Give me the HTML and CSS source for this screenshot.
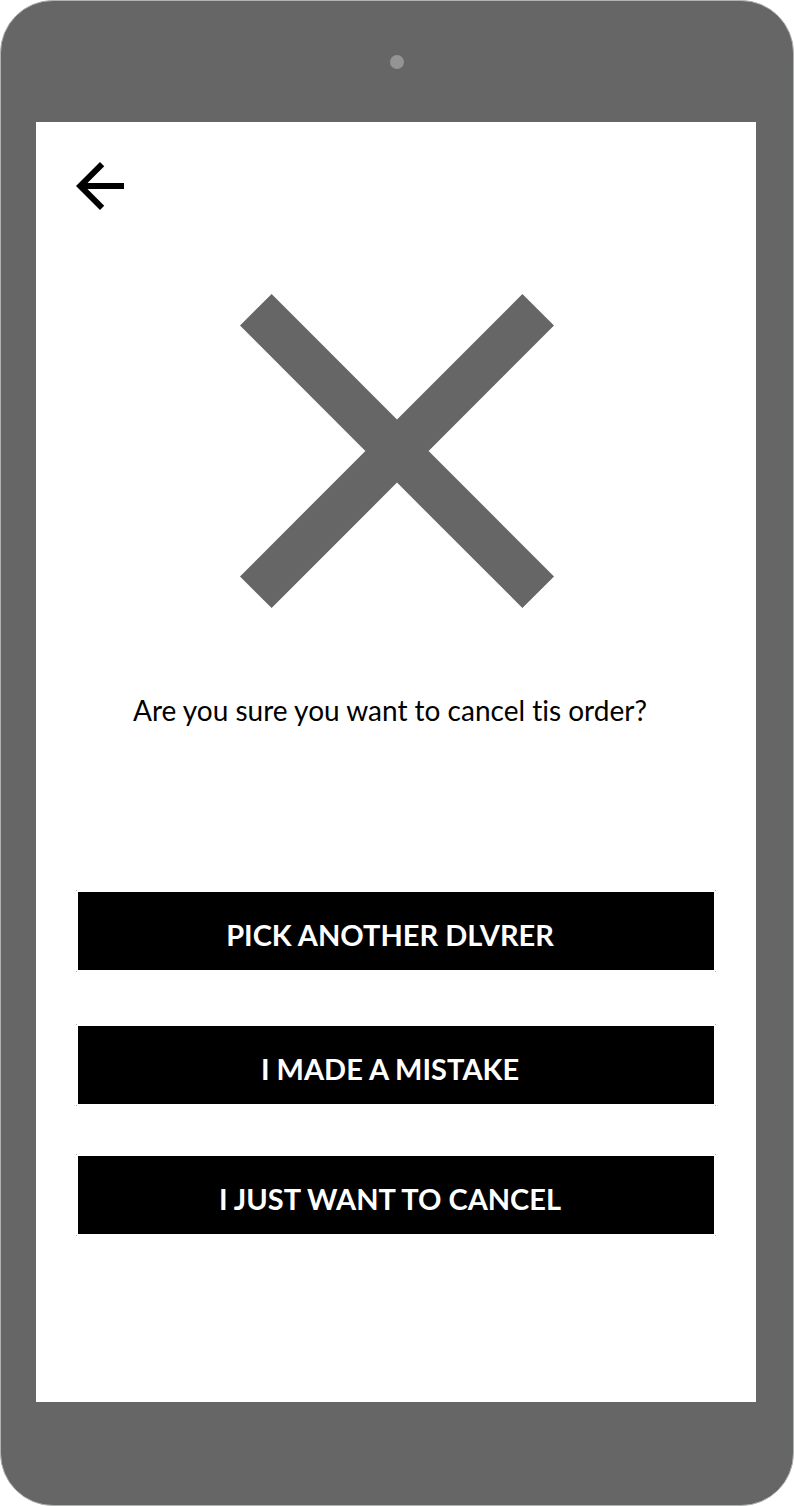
FILE: index.html
```html
<!DOCTYPE html>
<html lang="en">
<head>
<meta charset="utf-8">
<meta name="viewport" content="width=device-width, initial-scale=1">
<title>Cancel order</title>
<link rel="stylesheet" href="styles.css">
</head>
<body>
<div class="phone">
  <div class="phone-top"><span class="camera"></span></div>
  <main class="screen">
    <button class="back" type="button" aria-label="Back">
      <svg class="back-icon" viewBox="4 4 16 16" aria-hidden="true"><path d="M20 11H7.83l5.59-5.59L12 4l-8 8 8 8 1.41-1.41L7.83 13H20v-2z"/></svg>
    </button>
    <svg class="cross" viewBox="5 5 14 14" aria-hidden="true"><path d="M19 6.41 17.59 5 12 10.59 6.41 5 5 6.41 10.59 12 5 17.59 6.41 19 12 13.41 17.59 19 19 17.59 13.41 12z"/></svg>
    <p class="question">Are you sure you want to cancel tis order?</p>
    <div class="actions">
      <div class="retry">
        <button class="action" type="button">PICK ANOTHER DLVRER</button>
        <button class="action" type="button">I MADE A MISTAKE</button>
      </div>
      <button class="action" type="button">I JUST WANT TO CANCEL</button>
    </div>
  </main>
</div>
</body>
</html>
```
FILE: styles.css
```css
* {
  box-sizing: border-box;
}

body {
  margin: 0;
  background: #fff;
  color: #000;
  font-family: Lato, "Open Sans", sans-serif;
  font-variant-ligatures: none;
}

.phone {
  display: flex;
  flex-direction: column;
  min-height: 100vh;
  padding: 0 37px 103px 35px;
  border: 1px solid #b1b3b2;
  border-radius: 53px;
  background: #666;
}

.phone-top {
  display: flex;
  align-items: center;
  justify-content: center;
  height: 121px;
  padding-left: 2px;
}

.camera {
  width: 14px;
  height: 14px;
  border-radius: 50%;
  background: #949494;
}

.screen {
  display: flex;
  flex: 1;
  flex-direction: column;
  padding: 40px;
  background: #fff;
}

.back {
  align-self: flex-start;
  padding: 0;
  border: 0;
  background: none;
  cursor: pointer;
}

.back-icon {
  display: block;
  width: 48px;
  height: 48px;
}

.cross {
  align-self: center;
  width: 314px;
  max-width: 100%;
  margin: 84px 0 0 2px;
  fill: #666;
}

.question {
  margin: 84px 0 0;
  padding-right: 12px;
  font-size: 28px;
  line-height: 36px;
  text-align: center;
}

.actions,
.retry {
  display: flex;
  flex-direction: column;
}

.actions {
  gap: 48px;
  margin-top: 162px;
}

.retry {
  gap: 52px;
}

.action {
  min-height: 82px;
  padding: 8px 12px 0 0;
  border: 2px solid transparent;
  background:
    linear-gradient(#aaa, #aaa) 0 0 / 1px 1px no-repeat border-box,
    linear-gradient(#aaa, #aaa) 100% 0 / 1px 1px no-repeat border-box,
    linear-gradient(#aaa, #aaa) 0 100% / 1px 1px no-repeat border-box,
    linear-gradient(#aaa, #aaa) 100% 100% / 1px 1px no-repeat border-box,
    linear-gradient(#000, #000) padding-box;
  color: #fff;
  font: bold 29px/36px Lato, "Open Sans", sans-serif;
  cursor: pointer;
}
```
